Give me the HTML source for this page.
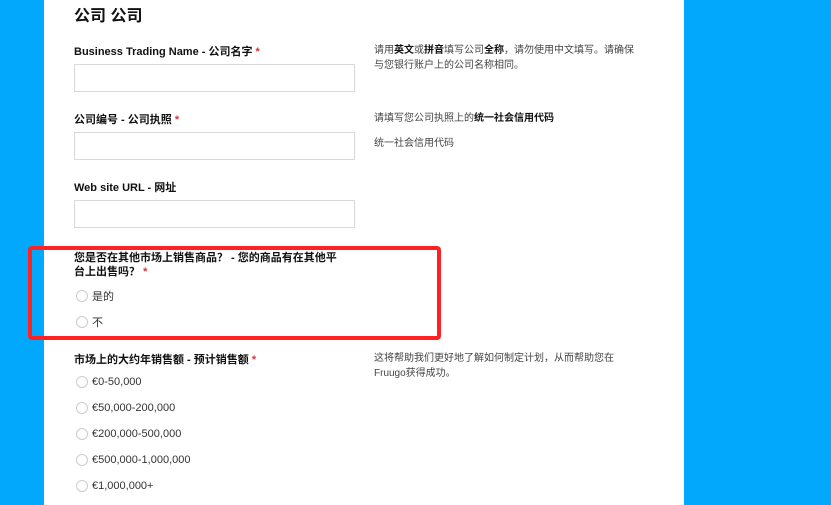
<!DOCTYPE html>
<html><head><meta charset="utf-8"><style>
*{margin:0;padding:0;box-sizing:border-box}
body{width:831px;height:505px;overflow:hidden;background:#02a8fb;position:relative;font-family:"Liberation Sans","Noto Sans CJK SC",sans-serif;color:#222}
.page{position:absolute;left:44px;top:0;width:640px;height:505px;background:#fff}
.a{position:absolute;white-space:nowrap}
.t{font-size:16px;font-weight:bold;color:#111}
.l{font-size:11px;font-weight:bold;color:#111}
.s{color:#d33}
.h{font-size:10px;color:#444;line-height:15px}
.h b{color:#111}
.in{position:absolute;left:74px;width:281px;height:28px;border:1px solid #d8d8d8;background:#fff}
.r{position:absolute;left:76px;font-size:11px;color:#333;display:flex;align-items:center}
.r i{display:inline-block;width:12px;height:12px;border:1px solid #ccc;border-radius:50%;margin-right:4px}
.box{position:absolute;left:28px;top:246px;width:413px;height:94px;border:4px solid #f22;border-radius:4px}
</style></head><body>
<div class="page"></div>
<div class="box"></div>
<div class="a t" style="left:74px;top:2px">公司 公司</div>
<div class="a l" style="left:74px;top:43px">Business Trading Name - 公司名字 <span class="s">*</span></div>
<div class="in" style="top:64px"></div>
<div class="a h" style="left:374px;top:43px">请用<b>英文</b>或<b>拼音</b>填写公司<b>全称</b>，请勿使用中文填写。请确保<br>与您银行账户上的公司名称相同。</div>
<div class="a l" style="left:74px;top:111px">公司编号 - 公司执照 <span class="s">*</span></div>
<div class="in" style="top:132px"></div>
<div class="a h" style="left:374px;top:111px">请填写您公司执照上的<b>统一社会信用代码</b></div>
<div class="a h" style="left:374px;top:136px">统一社会信用代码</div>
<div class="a l" style="left:74px;top:179px">Web site URL - 网址</div>
<div class="in" style="top:200px"></div>
<div class="a l" style="left:74px;top:251px;line-height:14px">您是否在其他市场上销售商品？ - 您的商品有在其他平<br>台上出售吗？ <span class="s">*</span></div>
<div class="r" style="top:288px"><i></i>是的</div>
<div class="r" style="top:314px"><i></i>不</div>
<div class="a l" style="left:74px;top:351px">市场上的大约年销售额 - 预计销售额 <span class="s">*</span></div>
<div class="a h" style="left:374px;top:351px">这将帮助我们更好地了解如何制定计划，从而帮助您在<br>Fruugo获得成功。</div>
<div class="r" style="top:376px"><i></i>€0-50,000</div>
<div class="r" style="top:402px"><i></i>€50,000-200,000</div>
<div class="r" style="top:428px"><i></i>€200,000-500,000</div>
<div class="r" style="top:454px"><i></i>€500,000-1,000,000</div>
<div class="r" style="top:480px"><i></i>€1,000,000+</div>
</body></html>
